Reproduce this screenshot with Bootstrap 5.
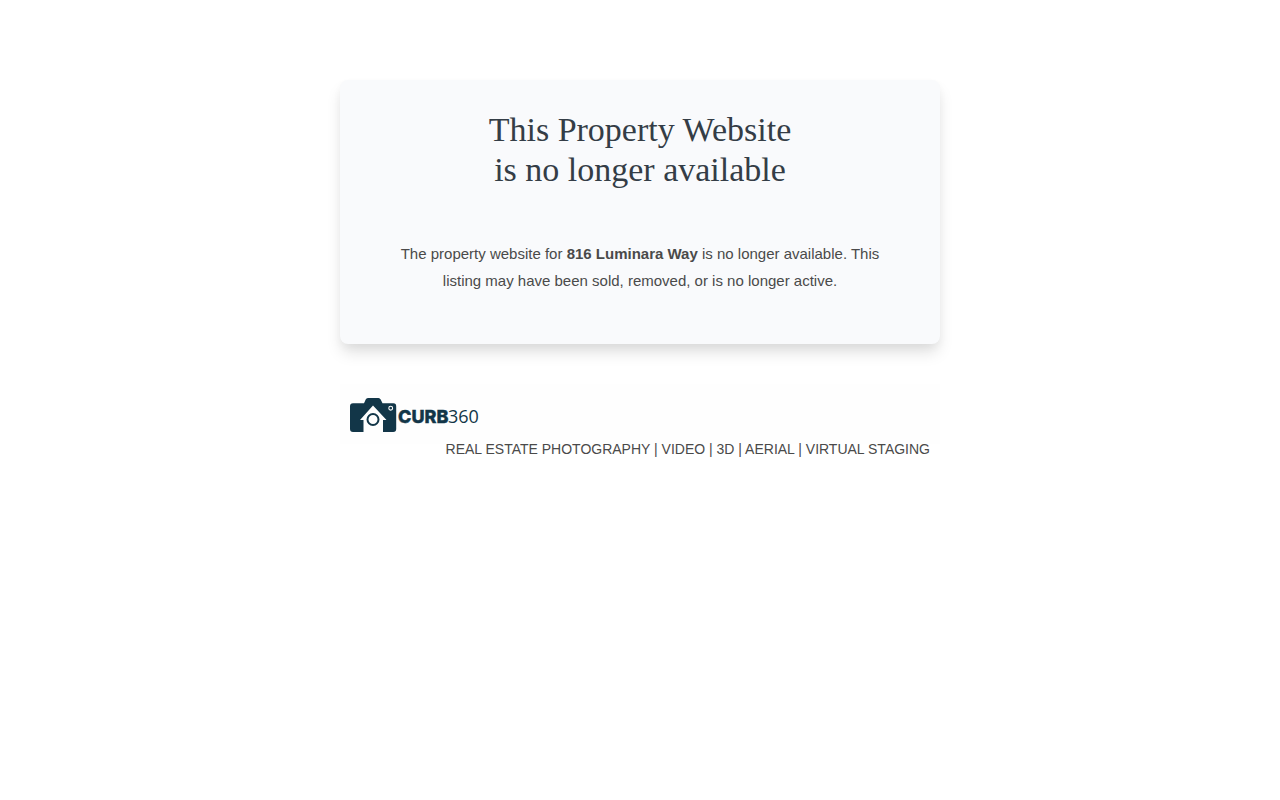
<!DOCTYPE html>
<html lang="en">
<head>
<meta charset="utf-8">
<meta name="viewport" content="width=device-width, initial-scale=1">
<title>This Property Website is no longer available</title>
<link rel="stylesheet" href="https://cdn.jsdelivr.net/npm/bootstrap@5.3.0/dist/css/bootstrap.min.css">
<style>
body { background: #fff; color: #4a4a4a; font-family: "Liberation Sans", Arial, sans-serif; }
.page-column { max-width: 600px; padding-top: 80px; }
.notice { background: #f9fafc; border-radius: 8px; padding: 30px 40px 50px; box-shadow: 0 10px 16px -2px rgba(0, 0, 0, .13), 0 4px 8px rgba(0, 0, 0, .03); }
.notice h1 { color: #343d46; font: 400 34px/40px "Liberation Serif", "Times New Roman", serif; margin-bottom: 50px; }
.notice p { font-size: 15px; line-height: 27px; }
.brand-bar { background: #fefefe; padding: 14px 10px 12px; margin-top: 40px; }
.brand-bar svg { display: block; }
.services { font-size: 14px; line-height: 20px; padding: 0 10px; margin-top: -5px; }
.logo-bold { font: 800 18px Inter, sans-serif; }
.logo-light { font: 400 18px "Open Sans", sans-serif; }
</style>
</head>
<body>
<div class="container-fluid px-0 page-column">
  <main class="notice text-center">
    <h1>This Property Website<br>is no longer available</h1>
    <p class="mb-0">The property website for <strong>816 Luminara Way</strong> is no longer available. This listing may have been sold, removed, or is no longer active.</p>
  </main>
  <footer>
    <div class="brand-bar">
      <svg width="130" height="34" viewBox="0 0 130 34" role="img" aria-label="CURB360">
        <path fill="#123648" d="M3 5.300h11L15.700 1.500Q16.200 0 18 0h10.500q1.500 0 2.200 1.500L32.500 5.300H43.500q2.700 0 2.700 3v22.700q0 3-3 3H33V22h3.500L23 7.500 10 22h3.500v12H3q-3 0-3-3V8.300q0-3 3-3z"/>
        <circle cx="23" cy="21.500" r="5.500" fill="none" stroke="#123648" stroke-width="2"/>
        <circle cx="40.700" cy="10.200" r="1.900" fill="none" stroke="#fff" stroke-width="1.100"/>
        <text class="logo-bold" x="48" y="25" fill="#123648" stroke="#123648" stroke-width=".4">CURB</text>
        <text class="logo-light" x="98" y="25" fill="#123648">360</text>
      </svg>
    </div>
    <p class="services text-end mb-0">REAL ESTATE PHOTOGRAPHY | VIDEO | 3D | AERIAL | VIRTUAL STAGING</p>
  </footer>
</div>
<script src="https://cdn.jsdelivr.net/npm/bootstrap@5.3.0/dist/js/bootstrap.bundle.min.js"></script>
</body>
</html>
